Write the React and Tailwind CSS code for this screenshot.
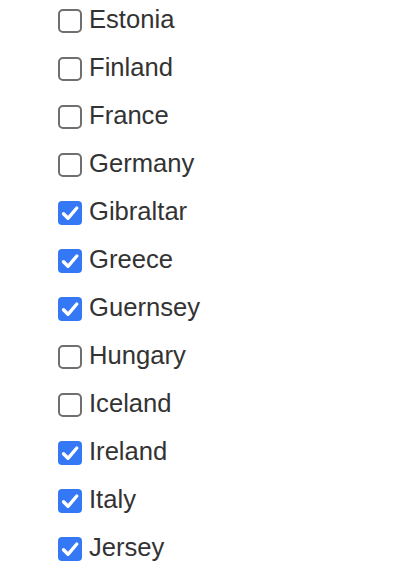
import { useState } from 'react';

const countries = [
  { name: 'Estonia', checked: false },
  { name: 'Finland', checked: false },
  { name: 'France', checked: false },
  { name: 'Germany', checked: false },
  { name: 'Gibraltar', checked: true },
  { name: 'Greece', checked: true },
  { name: 'Guernsey', checked: true },
  { name: 'Hungary', checked: false },
  { name: 'Iceland', checked: false },
  { name: 'Ireland', checked: true },
  { name: 'Italy', checked: true },
  { name: 'Jersey', checked: true },
];

const Box = ({ checked }) =>
  checked ? (
    <span className="flex h-6 w-6 shrink-0 items-center justify-center rounded-[4px] bg-[#3478f6]">
      <svg width="24" height="24" viewBox="0 0 24 24" fill="none">
        <path d="M5.5 12.8 L10 17.3 L18.8 7" stroke="white" strokeWidth="3.4" strokeLinecap="round" strokeLinejoin="round" />
      </svg>
    </span>
  ) : (
    <span className="block h-6 w-6 shrink-0 rounded-[5px] border-2 border-[#6f6f6f] bg-white" />
  );

const App = () => {
  const [items, setItems] = useState(countries);

  const toggle = (name) =>
    setItems(items.map((c) => (c.name === name ? { ...c, checked: !c.checked } : c)));

  return (
    <div className="min-h-screen bg-white font-['Liberation_Sans',Arial,sans-serif] text-[#333]">
      <ul className="-mt-[3px] pl-[58px]">
        {items.map((c) => (
          <li key={c.name} className="flex h-12 items-center gap-[7px] cursor-pointer" onClick={() => toggle(c.name)}>
            <Box checked={c.checked} />
            <span className="-mt-[2px] text-[25.6px] leading-none">{c.name}</span>
          </li>
        ))}
      </ul>
    </div>
  );
};

export default App;
